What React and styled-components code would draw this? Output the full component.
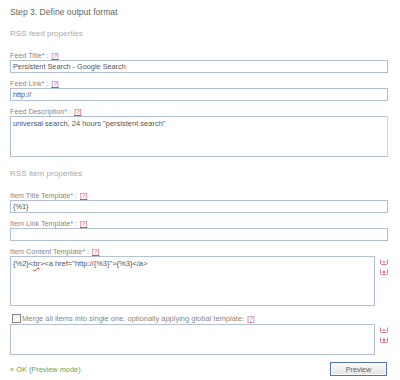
import React from "react";
import styled, { createGlobalStyle } from "styled-components";

const Global = createGlobalStyle`
  html, body { margin: 0; padding: 0; background: #fff; }
  body { font-family: "Liberation Sans", Arial, sans-serif; }
`;

const Page = styled.div`
  width: 400px;
  height: 380px;
  box-sizing: border-box;
  padding: 6px 12px 0 10px;
  display: flex;
  flex-direction: column;
  color: #666;
`;

const Heading = styled.div`
  font-size: 8.6px;
  line-height: 12px;
  color: #666;
`;

const SectionTitle = styled.div`
  font-size: 8.1px;
  line-height: 12px;
  color: #aaa;
  margin-top: ${(p) => p.$mt ?? 10}px;
`;

const Field = styled.div`
  display: flex;
  flex-direction: column;
  margin-top: ${(p) => p.$mt ?? 6}px;
`;

const Label = styled.div`
  font-size: 7.2px;
  line-height: 9px;
  height: 9px;
  color: #888;
  white-space: nowrap;
  display: flex;
  align-items: center;
`;

const Star = styled.span`
  color: #3a9ccf;
  margin-right: 2px;
`;

const Help = styled.a`
  color: #cc4a75;
  text-decoration: underline;
  margin-left: 3px;
  font-size: 6.5px;
`;

const Input = styled.input`
  box-sizing: border-box;
  width: 378px;
  height: 13px;
  margin: 0;
  padding: 0 2px;
  border: 1px solid #b3c0d2;
  font-family: "Liberation Sans", Arial, sans-serif;
  font-size: 7.3px;
  color: #555;
  outline: none;
  background: #fff;
`;

const Row = styled.div`
  display: flex;
  align-items: flex-start;
  gap: 5px;
`;

const Box = styled.div`
  box-sizing: border-box;
  width: ${(p) => p.$w}px;
  height: ${(p) => p.$h}px;
  border: 1px solid #b3c0d2;
  border-right-color: ${(p) => (p.$wide ? "#d0d8e2" : "#b3c0d2")};
  padding: 2px 2px;
  font-size: 7.5px;
  line-height: 9px;
  color: #555;
  white-space: pre;
  background: #fff;
`;

const Squiggle = styled.span`
  text-decoration: underline wavy #e03030;
  text-decoration-thickness: 0.5px;
`;

const IconCol = styled.div`
  display: flex;
  flex-direction: column;
  gap: 4px;
  padding-top: 3px;
`;

const IconBtn = styled.svg`
  width: 8px;
  height: 6px;
  display: block;
`;

const MinusPlus = ({ plus }) => (
  <IconBtn viewBox="0 0 8 6">
    <path d="M0.5 0.5 V4.5 Q0.5 5.5 1.5 5.5 H6.5 Q7.5 5.5 7.5 4.5 V0.5" fill="none" stroke="#d67a9a" strokeWidth="1" />
    <path d="M2.5 3 H5.5" stroke="#d0406e" strokeWidth="1" />
    {plus && <path d="M4 1.6 V4.4" stroke="#d0406e" strokeWidth="1" />}
  </IconBtn>
);

const CheckRow = styled.label`
  display: flex;
  align-items: center;
  height: 12px;
  margin-top: 6px;
  font-size: 7.5px;
  color: #888;
  white-space: nowrap;
`;

const Check = styled.span`
  box-sizing: border-box;
  width: 9px;
  height: 9px;
  margin-left: 2px;
  margin-right: 1px;
  border: 1px solid #8a8a8a;
  background: linear-gradient(#f0f0f0, #fff);
`;

const Footer = styled.div`
  display: flex;
  align-items: center;
  justify-content: space-between;
  margin-top: 7px;
  width: 378px;
`;

const Ok = styled.div`
  font-size: 7.4px;
  color: #5aa65a;
`;

const Button = styled.button`
  box-sizing: border-box;
  width: 57px;
  height: 14px;
  margin: 0 1px 0 0;
  padding: 0;
  border: 1px solid #5572ad;
  box-shadow: inset 0 0 0 1px #fdfdfd;
  background: linear-gradient(#fbfbfb, #e2e2e2);
  font-family: "Liberation Sans", Arial, sans-serif;
  font-size: 7.2px;
  color: #666;
`;

const FieldLabel = ({ children }) => (
  <Label>
    {children}
    <Star>*</Star>: <Help>[?]</Help>
  </Label>
);

export default function App() {
  return (
    <>
      <Global />
      <Page>
        <Heading>Step 3. Define output format</Heading>
        <SectionTitle>RSS feed properties</SectionTitle>
        <Field $mt={11}>
          <FieldLabel>Feed Title</FieldLabel>
          <Input defaultValue="Persistent Search - Google Search" />
        </Field>
        <Field>
          <FieldLabel>Feed Link</FieldLabel>
          <Input defaultValue="http://" />
        </Field>
        <Field>
          <FieldLabel>Feed Description</FieldLabel>
          <Box $w={378} $h={41} $wide>universal search, 24 hours "persistent search"</Box>
        </Field>
        <SectionTitle $mt={11}>RSS item properties</SectionTitle>
        <Field $mt={11}>
          <FieldLabel>Item Title Template</FieldLabel>
          <Input defaultValue="{%1}" />
        </Field>
        <Field>
          <FieldLabel>Item Link Template</FieldLabel>
          <Input defaultValue="" />
        </Field>
        <Field>
          <FieldLabel>Item Content Template</FieldLabel>
          <Row>
            <Box $w={367} $h={50}>
              {"{%2}<"}
              <Squiggle>br</Squiggle>
              {'><a href="http://{%3}">{%3}</a>'}
            </Box>
            <IconCol>
              <MinusPlus />
              <MinusPlus plus />
            </IconCol>
          </Row>
        </Field>
        <CheckRow>
          <Check />
          Merge all items into single one, optionally applying global template:
          <Help>[?]</Help>
        </CheckRow>
        <Row>
          <Box $w={367} $h={31} />
          <IconCol>
            <MinusPlus />
            <MinusPlus plus />
          </IconCol>
        </Row>
        <Footer>
          <Ok>» OK (Preview mode)</Ok>
          <Button>Preview</Button>
        </Footer>
      </Page>
    </>
  );
}
